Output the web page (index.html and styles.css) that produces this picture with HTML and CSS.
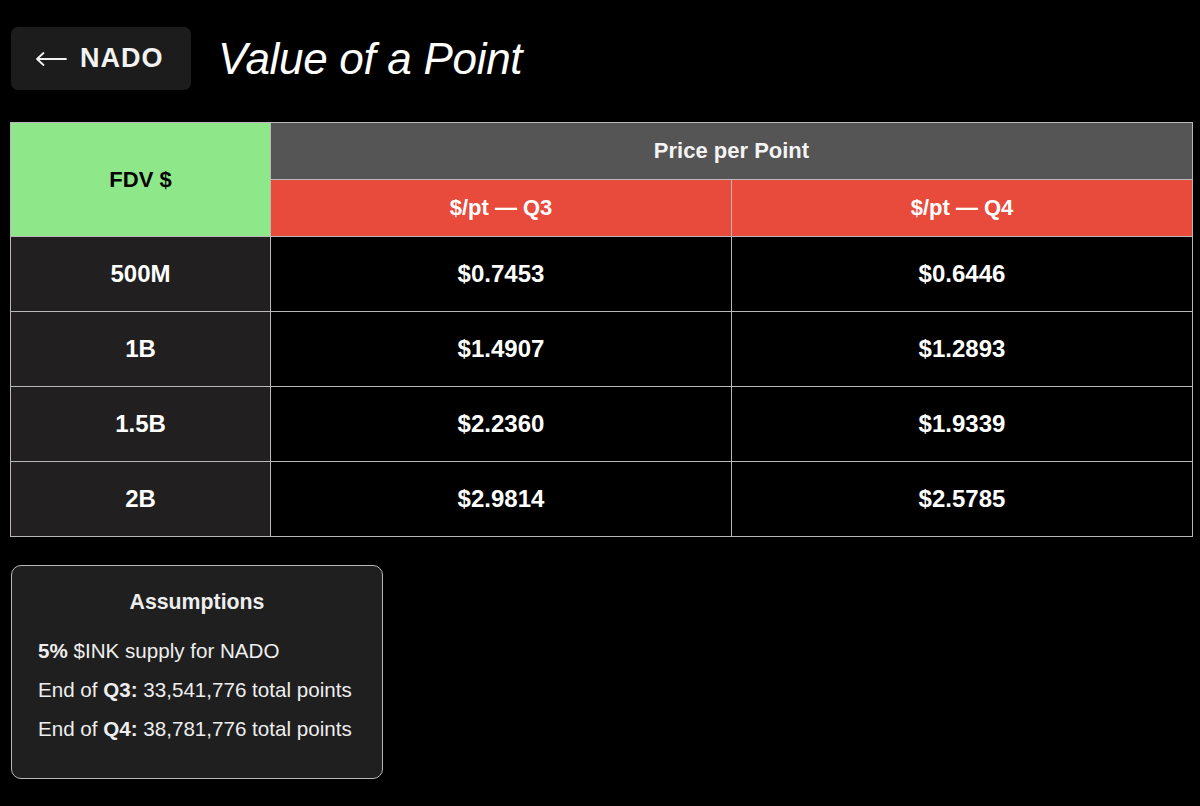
FILE: index.html
```html
<!DOCTYPE html>
<html>
<head>
<meta charset="utf-8">
<link rel="stylesheet" href="styles.css">
</head>
<body>
<div class="page">
  <header class="top">
    <div class="back">
      <svg class="arrow" width="32" height="16" viewBox="0 0 32 16" aria-hidden="true">
        <path d="M2 8 H31 M8.5 2 L2 8 L8.5 14" fill="none" stroke="#f2f2f2" stroke-width="1.8" stroke-linecap="round" stroke-linejoin="round"/>
      </svg>
      <span class="back-label">NADO</span>
    </div>
    <h1 class="title">Value of a Point</h1>
  </header>
  <table class="grid">
    <colgroup><col class="c1"><col class="c2"><col class="c3"></colgroup>
    <thead>
      <tr class="h1row">
        <th rowspan="2" class="fdv">FDV $</th>
        <th colspan="2" class="ppp">Price per Point</th>
      </tr>
      <tr class="h2row">
        <th class="q">$/pt — Q3</th>
        <th class="q">$/pt — Q4</th>
      </tr>
    </thead>
    <tbody>
      <tr><td class="lab">500M</td><td>$0.7453</td><td>$0.6446</td></tr>
      <tr><td class="lab">1B</td><td>$1.4907</td><td>$1.2893</td></tr>
      <tr><td class="lab">1.5B</td><td>$2.2360</td><td>$1.9339</td></tr>
      <tr><td class="lab">2B</td><td>$2.9814</td><td>$2.5785</td></tr>
    </tbody>
  </table>
  <section class="assume">
    <h2 class="assume-title">Assumptions</h2>
    <p class="line"><b>5%</b> $INK supply for NADO</p>
    <p class="line">End of <b>Q3:</b> 33,541,776 total points</p>
    <p class="line">End of <b>Q4:</b> 38,781,776 total points</p>
  </section>
</div>
</body>
</html>
```
FILE: styles.css
```css
html, body {
  margin: 0;
  padding: 0;
  background: #000;
  color: #fff;
  font-family: "Liberation Sans", Arial, sans-serif;
}
.page {
  width: 1200px;
  height: 806px;
  padding: 27px 8px 0 10px;
  box-sizing: border-box;
}
.top {
  display: flex;
  align-items: center;
  height: 63px;
}
.back {
  margin-left: 1px;
  width: 180px;
  height: 63px;
  box-sizing: border-box;
  background: #1c1c1c;
  border-radius: 7px;
  display: flex;
  align-items: center;
  padding-left: 24px;
  gap: 13px;
}
.arrow {
  display: block;
  flex: none;
}
.back-label {
  font-size: 27px;
  font-weight: bold;
  letter-spacing: 1px;
  color: #f2f2f2;
}
.title {
  margin: 0 0 0 27px;
  font-size: 44px;
  font-style: italic;
  font-weight: normal;
  color: #fff;
  letter-spacing: -0.3px;
}
.grid {
  margin-top: 32px;
  border-collapse: collapse;
  width: 1182px;
  table-layout: fixed;
  border: 1px solid #b8b8b8;
}
.c1 { width: 260px; }
.c2 { width: 461px; }
.c3 { width: 461px; }
.grid th, .grid td {
  border: 1px solid #b8b8b8;
  text-align: center;
  padding: 0;
  font-weight: bold;
}
.h1row th, .h2row th { height: 56px; }
.fdv {
  background: #8ee88a;
  color: #000;
  font-size: 22px;
}
.ppp {
  background: #555555;
  color: #f4f4f4;
  font-size: 22px;
}
.q {
  background: #e84a3c;
  color: #fff;
  font-size: 22px;
}
.grid td {
  height: 74px;
  font-size: 24px;
  background: #000;
  color: #fff;
}
.grid td.lab {
  background: #211f1f;
}
.assume {
  margin: 28px 0 0 1px;
  width: 372px;
  height: 214px;
  box-sizing: border-box;
  background: #1f1f1f;
  border: 1.5px solid #b8b8b8;
  border-radius: 10px;
  padding: 24px 0 0 26px;
}
.assume-title {
  margin: 0 0 24px -26px;
  text-align: center;
  font-size: 21.3px;
  font-weight: bold;
  color: #eee;
}
.line {
  margin: 0 0 16px 0;
  font-size: 20.6px;
  line-height: 23px;
  color: #eee;
}
.line b { font-weight: bold; }
```
